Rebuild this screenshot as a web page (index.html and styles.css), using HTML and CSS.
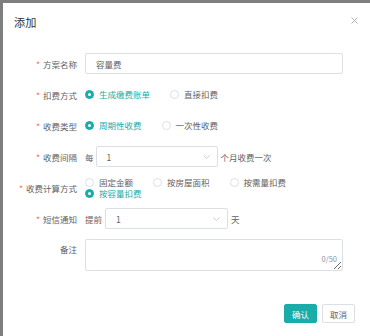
FILE: index.html
```html
<!DOCTYPE html>
<html lang="zh-CN">
<head>
    <meta charset="UTF-8">
    <title>添加</title>
    <link rel="stylesheet" href="styles.css">
</head>
<body>
    <div class="dialog">
        <!-- 标题栏 -->
        <div class="dialog-header">
            <span class="dialog-title">添加</span>
            <svg class="close" width="7" height="7" viewBox="0 0 7 7">
                <path d="M0.5 0.5 L6.5 6.5 M6.5 0.5 L0.5 6.5" stroke="#a8abb2" stroke-width="0.9" fill="none"/>
            </svg>
        </div>

        <!-- 表单 -->
        <div class="form">
            <div class="row">
                <label class="label"><i>*</i>方案名称</label>
                <input class="input" type="text" value="容量费">
            </div>

            <div class="row">
                <label class="label"><i>*</i>扣费方式</label>
                <div class="radios">
                    <span class="radio checked"><span class="dot"></span>生成缴费账单</span>
                    <span class="radio"><span class="dot"></span>直接扣费</span>
                </div>
            </div>

            <div class="row">
                <label class="label"><i>*</i>收费类型</label>
                <div class="radios">
                    <span class="radio checked"><span class="dot"></span>周期性收费</span>
                    <span class="radio"><span class="dot"></span>一次性收费</span>
                </div>
            </div>

            <div class="row">
                <label class="label"><i>*</i>收费间隔</label>
                <span class="text">每</span>
                <div class="select select-month">
                    <span>1</span>
                    <svg width="7" height="4" viewBox="0 0 7 4"><path d="M0.5 0.5 L3.5 3.5 L6.5 0.5" stroke="#c0c4cc" stroke-width="0.8" fill="none"/></svg>
                </div>
                <span class="text">个月收费一次</span>
            </div>

            <div class="row row-calc">
                <label class="label"><i>*</i>收费计算方式</label>
                <div class="radios wrap">
                    <span class="radio"><span class="dot"></span>固定金额</span>
                    <span class="radio"><span class="dot"></span>按房屋面积</span>
                    <span class="radio"><span class="dot"></span>按需量扣费</span>
                    <span class="radio checked"><span class="dot"></span>按容量扣费</span>
                </div>
            </div>

            <div class="row row-sms">
                <label class="label"><i>*</i>短信通知</label>
                <span class="text">提前</span>
                <div class="select select-day">
                    <span>1</span>
                    <svg width="7" height="4" viewBox="0 0 7 4"><path d="M0.5 0.5 L3.5 3.5 L6.5 0.5" stroke="#c0c4cc" stroke-width="0.8" fill="none"/></svg>
                </div>
                <span class="text">天</span>
            </div>

            <div class="row row-remark">
                <label class="label">备注</label>
                <div class="textarea-box">
                    <textarea class="textarea"></textarea>
                    <span class="count">0/50</span>
                </div>
            </div>
        </div>

        <!-- 底部按钮 -->
        <div class="dialog-footer">
            <button class="btn primary">确认</button>
            <button class="btn">取消</button>
        </div>
    </div>
</body>
</html>
```

FILE: styles.css
```css
body {
    margin: 0;
    background-color: #7e7e7e;
    font-family: "Noto Sans CJK SC", "Noto Sans", sans-serif;
    font-size: 8.5px;
    color: #606266;
}

.dialog {
    margin: 3px 0 0 3px;
    height: 333px;
    background-color: #fff;
    box-sizing: border-box;
}

.dialog-header {
    height: 38px;
    display: flex;
    align-items: center;
    justify-content: space-between;
    padding: 0 12px 0 11px;
}

.dialog-title {
    font-size: 11.2px;
    color: #303133;
}

.close {
    margin-top: -3px;
}

.form {
    padding-top: 12px;
}

.row {
    display: flex;
    align-items: center;
    min-height: 21px;
    margin-bottom: 10px;
}

.label {
    width: 82px;
    flex-shrink: 0;
    box-sizing: border-box;
    padding-right: 8px;
    text-align: right;
    color: #606266;
}

.label i {
    font-style: normal;
    color: #f56c6c;
    margin-right: 3px;
}

.input {
    width: 258px;
    height: 21px;
    box-sizing: border-box;
    border: 1px solid #dcdfe6;
    border-radius: 2px;
    padding: 0 10px;
    font-family: inherit;
    font-size: 8.5px;
    color: #606266;
    outline: none;
}

.radios {
    display: flex;
    align-items: center;
    width: 258px;
}

.radios.wrap {
    flex-wrap: wrap;
}

.radio {
    display: flex;
    align-items: center;
    margin-right: 20px;
    line-height: 11px;
    color: #606266;
}

.dot {
    width: 9px;
    height: 9px;
    box-sizing: border-box;
    border: 1px solid #dcdfe6;
    border-radius: 50%;
    margin-right: 5px;
    display: flex;
    align-items: center;
    justify-content: center;
}

.radio.checked {
    color: #19aca8;
}

.radio.checked .dot {
    background-color: #19aca8;
    border-color: #19aca8;
}

.radio.checked .dot::after {
    content: "";
    width: 3px;
    height: 3px;
    border-radius: 50%;
    background-color: #fff;
}

.row-calc {
    margin-bottom: 9px;
}

.text {
    color: #606266;
}

.select {
    height: 21px;
    box-sizing: border-box;
    border: 1px solid #dcdfe6;
    border-radius: 2px;
    display: flex;
    align-items: center;
    justify-content: space-between;
    padding: 0 7px 0 10px;
    color: #606266;
}

.select-month {
    width: 122px;
    margin: 0 3px 0 2px;
}

.select-day {
    width: 123px;
    margin: 0 3px 0 3px;
}

.row-remark {
    align-items: flex-start;
}

.row-remark .label {
    line-height: 20px;
}

.textarea-box {
    position: relative;
    width: 258px;
    height: 32px;
}

.textarea {
    width: 100%;
    height: 100%;
    box-sizing: border-box;
    border: 1px solid #dcdfe6;
    border-radius: 2px;
    resize: vertical;
    outline: none;
    margin: 0;
    display: block;
}

.count {
    position: absolute;
    right: 6px;
    bottom: 7px;
    font-size: 7.5px;
    color: #909399;
}

.dialog-footer {
    display: flex;
    justify-content: flex-end;
    gap: 5px;
    padding: 23px 15px 0 0;
}

.btn {
    height: 19px;
    padding: 0 7px;
    font-family: inherit;
    font-size: 8.5px;
    border: 1px solid #dcdfe6;
    border-radius: 2px;
    background-color: #fff;
    color: #606266;
    cursor: pointer;
}

.btn.primary {
    background-color: #19aca8;
    border-color: #19aca8;
    color: #fff;
}
```
